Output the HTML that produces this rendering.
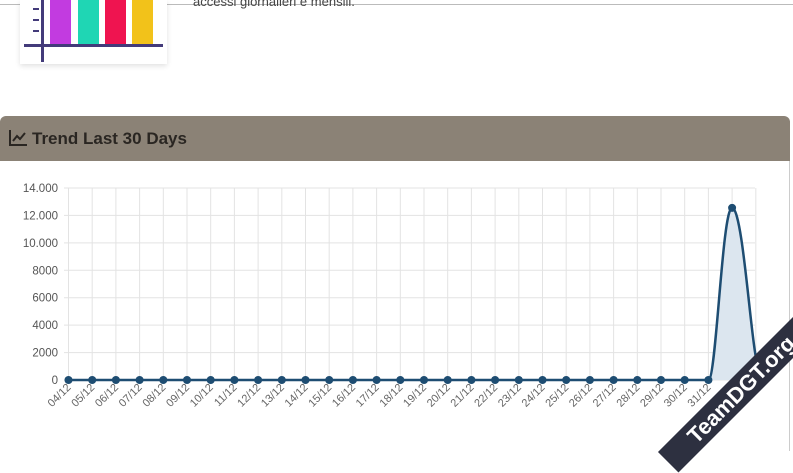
<!DOCTYPE html>
<html><head><meta charset="utf-8"><style>
body{margin:0;width:793px;height:444px;overflow:hidden;background:#fff;font-family:"Liberation Sans",sans-serif;position:relative}
.top{position:absolute;left:0;top:0;width:793px;height:4px;border-bottom:1px solid #bbb;background:#fff}
.img{position:absolute;left:20px;top:0;width:147px;height:64px;background:#fff;box-shadow:0 2px 5px rgba(0,0,0,.12)}
.txt{position:absolute;left:193px;top:-6px;font-size:13px;color:#444}
.hdr{position:absolute;left:0;top:116px;width:790px;height:45px;background:#8b8276;border-radius:6px 6px 0 0}
.hdr span{position:absolute;left:32px;top:13px;font-size:17px;font-weight:bold;color:#2a2622}
.card{position:absolute;left:0;top:161px;width:789px;height:290px;border-right:1px solid #ccc}
.wm{position:absolute;left:636px;top:370px;width:220px;height:29px;background:#2d3040;transform:rotate(-45deg);transform-origin:center;color:#fff;font-weight:bold;font-size:22px;text-align:center;line-height:29px;text-indent:-14px}
</style></head><body>
<div class="top"></div>
<div class="img"><svg width="147" height="64">
<rect x="30" y="0" width="21" height="44" fill="#c23be0"/>
<rect x="58" y="0" width="21" height="44" fill="#1fd6b4"/>
<rect x="85" y="0" width="21" height="44" fill="#ef1450"/>
<rect x="112" y="0" width="21" height="44" fill="#f2c21a"/>
<rect x="4" y="44" width="139" height="3" fill="#433b7a"/>
<rect x="21" y="0" width="3" height="62" fill="#433b7a"/>
<rect x="13" y="8" width="6" height="2" fill="#433b7a"/><rect x="13" y="19" width="6" height="2" fill="#433b7a"/><rect x="13" y="30" width="6" height="2" fill="#433b7a"/>
</svg></div>
<div class="txt">accessi giornalieri e mensili.</div>
<div class="hdr"><svg width="20" height="18" style="position:absolute;left:9px;top:13px"><path d="M1 1V16H18" stroke="#2a2622" stroke-width="2" fill="none"/><path d="M4 12L8 7L11 10L16 4" stroke="#2a2622" stroke-width="2" fill="none"/></svg><span>Trend Last 30 Days</span></div>
<div class="card"></div>
<svg id="ch" width="793" height="444" style="position:absolute;left:0;top:0"></svg>
<div class="wm">TeamDGT.org</div>
<script>
var s='',x0=68.5,dx=23.7,y0=380,yt=188;
for(var i=0;i<8;i++){var y=y0-i*27.43;s+='<line x1="64" x2="755" y1="'+y+'" y2="'+y+'" stroke="#e3e3e3"/>';
s+='<text x="58" y="'+(y+4)+'" text-anchor="end" font-size="11.5" fill="#555" font-family="Liberation Sans">'+['0','2000','4000','6000','8000','10.000','12.000','14.000'][i]+'</text>';}
var d=['04/12','05/12','06/12','07/12','08/12','09/12','10/12','11/12','12/12','13/12','14/12','15/12','16/12','17/12','18/12','19/12','20/12','21/12','22/12','23/12','24/12','25/12','26/12','27/12','28/12','29/12','30/12','31/12','01/01','02/01'];
var v=[];for(i=0;i<30;i++){v.push(0)}v[28]=12550;v[29]=1700;
for(i=0;i<30;i++){var x=x0+i*dx;s+='<line x1="'+x+'" x2="'+x+'" y1="'+yt+'" y2="384" stroke="#e3e3e3"/>';
s+='<text transform="translate('+(x+3)+',388) rotate(-45)" text-anchor="end" font-size="11" fill="#666" font-family="Liberation Sans">'+d[i]+'</text>';}
function Y(a){return y0-a/2000*27.43}
var xa=x0+27*dx,xb=x0+28*dx,xc=x0+29*dx;
var path='M'+x0+' '+y0+'L'+xa+' '+y0+'C'+(xa+8)+' '+y0+' '+(xb-10)+' '+Y(12550)+' '+xb+' '+Y(12550)+'C'+(xb+10)+' '+Y(12550)+' '+(xc-6)+' '+Y(4000)+' '+xc+' '+Y(1700);
s+='<path d="'+path+'L'+xc+' '+y0+'Z" fill="#dce6ef"/>';
s+='<path d="'+path+'" stroke="#1e4d72" stroke-width="2.5" fill="none"/>';
for(i=0;i<29;i++){s+='<circle cx="'+(x0+i*dx)+'" cy="'+Y(v[i])+'" r="4" fill="#1e4d72"/>';}
document.getElementById('ch').innerHTML=s;
</script>
</body></html>
